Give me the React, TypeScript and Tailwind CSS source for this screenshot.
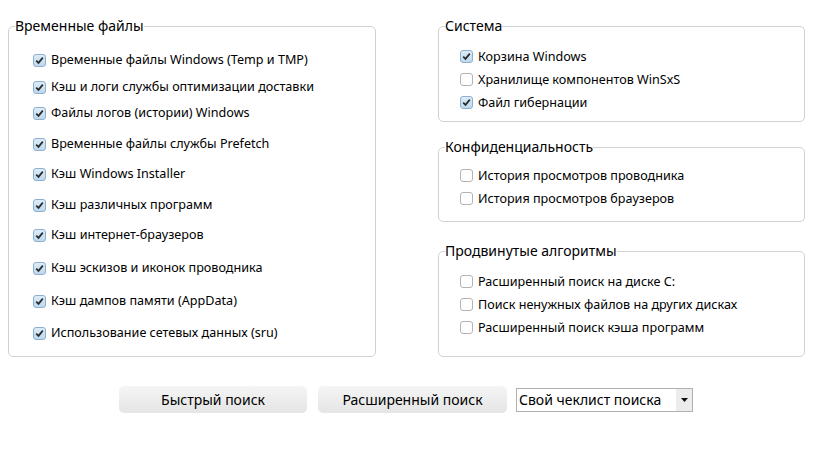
import React from "react";

const font = { fontFamily: '"Noto Sans", "Open Sans", sans-serif' };

function Box({ checked }: { checked: boolean }) {
  return checked ? (
    <span className="w-[13px] h-[13px] shrink-0 rounded-[3px] border border-[#8fb0cc] bg-gradient-to-b from-[#dcecf9] to-[#bcd9f0] flex items-center justify-center">
      <svg width="9" height="9" viewBox="0 0 9 9">
        <path d="M1.2 4.6 L3.5 6.9 L7.8 1.6" fill="none" stroke="#2b2b2b" strokeWidth="1.7" />
      </svg>
    </span>
  ) : (
    <span className="w-[13px] h-[13px] shrink-0 rounded-[3px] border border-[#b4b4b4] bg-white" />
  );
}

function Row({ label, checked, cls }: { label: string; checked: boolean; cls: string }) {
  return (
    <div className={`flex items-center gap-[5px] ${cls}`}>
      <Box checked={checked} />
      <span className="text-[12.6px] text-black whitespace-nowrap leading-none pt-[1px]">{label}</span>
    </div>
  );
}

function Group({ title, children, cls, inner }: { title: string; children: React.ReactNode; cls: string; inner: string }) {
  return (
    <fieldset className={`border border-[#d2d2d2] rounded-[5px] p-0 ${cls}`}>
      <legend className="ml-[6px] h-[20px] leading-[20px] text-[14px] text-black p-0">{title}</legend>
      <div className={inner}>{children}</div>
    </fieldset>
  );
}

const left: [string, boolean, string][] = [
  ["Временные файлы Windows (Temp и TMP)", true, "mt-[14px]"],
  ["Кэш и логи службы оптимизации доставки", true, "mt-[7px]"],
  ["Файлы логов (истории) Windows", true, "mt-[6px]"],
  ["Временные файлы службы Prefetch", true, "mt-[11px]"],
  ["Кэш Windows Installer", true, "mt-[10px]"],
  ["Кэш различных программ", true, "mt-[11px]"],
  ["Кэш интернет-браузеров", true, "mt-[10px]"],
  ["Кэш эскизов и иконок проводника", true, "mt-[13px]"],
  ["Кэш дампов памяти (AppData)", true, "mt-[13px]"],
  ["Использование сетевых данных (sru)", true, "mt-[12px]"],
];

export default function App() {
  return (
    <div className="w-[817px] h-[459px] bg-white overflow-hidden" style={font}>
      <div className="flex pt-[16px] pl-[8px]">
        <Group title="Временные файлы" cls="w-[368px]" inner="pl-[24px] pb-[13px]">
          {left.map(([l, c, m]) => (
            <Row key={l} label={l} checked={c} cls={`h-[20px] ${m}`} />
          ))}
        </Group>
        <div className="ml-[62px] w-[367px] flex flex-col">
          <Group title="Система" cls="" inner="pl-[21px] pt-[9px] pb-[7px]">
            <Row label="Корзина Windows" checked cls="h-[23px]" />
            <Row label="Хранилище компонентов WinSxS" checked={false} cls="h-[23px]" />
            <Row label="Файл гибернации" checked cls="h-[23px]" />
          </Group>
          <Group title="Конфиденциальность" cls="mt-[15px]" inner="pl-[21px] pt-[7px] pb-[11px]">
            <Row label="История просмотров проводника" checked={false} cls="h-[23px]" />
            <Row label="История просмотров браузеров" checked={false} cls="h-[23px]" />
          </Group>
          <Group title="Продвинутые алгоритмы" cls="mt-[19px]" inner="pl-[21px] pt-[9px] pb-[17px]">
            <Row label="Расширенный поиск на диске C:" checked={false} cls="h-[23px]" />
            <Row label="Поиск ненужных файлов на других дисках" checked={false} cls="h-[23px]" />
            <Row label="Расширенный поиск кэша программ" checked={false} cls="h-[23px]" />
          </Group>
        </div>
      </div>
      <div className="flex items-center pl-[119px] mt-[29px]">
        <button className="w-[188px] h-[27px] rounded-[5px] bg-gradient-to-b from-[#f5f5f5] to-[#e5e5e5] text-[14px] text-black">
          Быстрый поиск
        </button>
        <button className="ml-[11px] w-[189px] h-[27px] rounded-[5px] bg-gradient-to-b from-[#f5f5f5] to-[#e5e5e5] text-[14px] text-black">
          Расширенный поиск
        </button>
        <div className="ml-[9px] w-[177px] h-[24px] border border-[#b0b0b0] bg-white flex items-center">
          <span className="flex-1 pl-[2px] text-[14px] text-black whitespace-nowrap">Свой чеклист поиска</span>
          <span className="w-[16px] h-full bg-[#ececec] flex items-center justify-center">
            <svg width="7" height="4" viewBox="0 0 7 4"><path d="M0 0 H7 L3.5 4 Z" fill="#111" /></svg>
          </span>
        </div>
      </div>
    </div>
  );
}
